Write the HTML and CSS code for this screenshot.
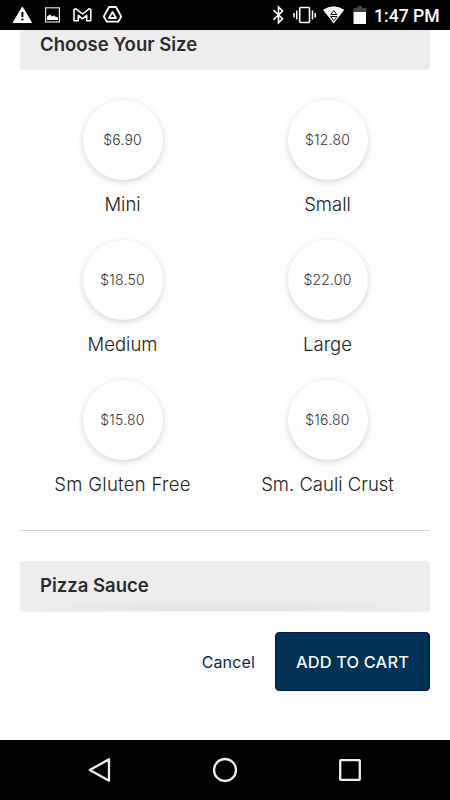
FILE: index.html
```html
<!DOCTYPE html>
<html lang="en">
<head>
<meta charset="utf-8">
<title>Choose Your Size</title>
<link rel="stylesheet" href="styles.css">
</head>
<body>
<div class="status-bar">
  <svg class="status-icons" width="130" height="30" viewBox="0 0 130 30" fill="none">
    <path d="M22.400 7 31.500 22.500H13.200Z" fill="#fff" stroke="#fff" stroke-linejoin="round"/>
    <path d="M22.400 12v5M22.400 18.600v2" stroke="#000" stroke-width="2"/>
    <rect x="45.600" y="7.800" width="13.800" height="14.200" stroke="#ddd" stroke-width="1.200"/>
    <path d="M47 20v-3.500l3-2 2 2 2-1 2 1.500 2 .5V20Z" fill="#fff"/>
    <path d="M74 9.500 76 8.800 82.500 14 89 8.800 90.800 9.500V20.800H86.700V15.500L82.500 18.800 78.300 15.500V20.800H74Z" stroke="#fff" stroke-width="1.600" stroke-linejoin="round"/>
    <path d="M109 7h7l5.200 9.500-3 5.200h-11.400l-3-5.200Z" stroke="#fff" stroke-width="1.800" stroke-linejoin="round"/>
    <path d="M112.500 12 116 18h-7Z" stroke="#fff" stroke-width="1.800" stroke-linejoin="round"/>
  </svg>
  <svg class="status-icons" width="104" height="30" viewBox="270 0 104 30" fill="none">
    <path d="m273.500 10 9 8.700-4 4V7l4 4-9 8.700" stroke="#fff" stroke-width="1.600"/>
    <rect x="299.700" y="7.500" width="9.800" height="15" rx="1" stroke="#fff" stroke-width="1.600"/>
    <path d="M296.700 10.500v9M294 13v4.500M312.500 10.500v9M315.200 13v4.500" stroke="#fff" stroke-width="1.500"/>
    <path d="M323 9.800Q333.500 2.500 344.300 9.800L333.700 23.500Z" fill="#fff"/>
    <path d="m333.800 10.500 3 4h-6ZM330.500 16.500h6.600l-3.300 4.200Z" stroke="#111" stroke-width="1"/>
    <path d="M357.500 6h4.500v2h4v4h-12.500V8h4Z" fill="#444"/>
    <path d="M353.500 12H366v12h-12.500Z" fill="#fff"/>
  </svg>
  <span class="clock">1:47 PM</span>
</div>

<main class="content">
  <h2 class="section section-size">Choose Your Size</h2>
  <div class="sizes">
    <div class="size"><div class="price">$6.90</div><div class="label">Mini</div></div>
    <div class="size"><div class="price">$12.80</div><div class="label">Small</div></div>
    <div class="size"><div class="price">$18.50</div><div class="label">Medium</div></div>
    <div class="size"><div class="price">$22.00</div><div class="label">Large</div></div>
    <div class="size"><div class="price">$15.80</div><div class="label wide">Sm Gluten Free</div></div>
    <div class="size"><div class="price">$16.80</div><div class="label">Sm. Cauli Crust</div></div>
  </div>
  <h2 class="section section-sauce">Pizza Sauce</h2>
</main>

<footer class="actions">
  <button class="cancel">Cancel</button>
  <button class="add">ADD TO CART</button>
</footer>

<nav class="nav-bar">
  <svg width="450" height="60" viewBox="0 740 450 60" fill="none" stroke="#eee" stroke-width="2.300">
    <path d="M109 759.300v21.400L89.800 770Z" stroke-linejoin="round"/>
    <circle cx="225" cy="770" r="11"/>
    <rect x="340.200" y="760.200" width="19.600" height="19.600" rx=".5"/>
  </svg>
</nav>
</body>
</html>
```
FILE: styles.css
```css
* { box-sizing: border-box; }
body {
  margin: 0;
  width: 450px;
  height: 800px;
  overflow: hidden;
  display: flex;
  flex-direction: column;
  background: #fefefe;
  color: #222;
  font-family: Inter, "Liberation Sans", sans-serif;
}
.status-bar {
  flex: none;
  height: 30px;
  display: flex;
  align-items: center;
  background: #000;
  color: #fff;
}
.status-icons { flex: none; }
.status-icons + .status-icons { margin-left: 140px; }
.clock {
  font: 500 17.6px/30px Roboto, sans-serif;
  white-space: nowrap;
  padding-top: 2px;
}
.content { padding: 0 20px; }
.section {
  margin: 0;
  padding-left: 20px;
  background: #ededed;
  color: #2b2b2d;
  font-size: 18.5px;
  font-weight: 600;
  white-space: nowrap;
}
.section-size {
  height: 40px;
  line-height: 28px;
  border-radius: 0 0 3px 3px;
}
.sizes {
  height: 461px;
  padding-top: 30px;
  display: grid;
  grid-template-columns: 1fr 1fr;
  grid-auto-rows: 140px;
  border-bottom: 1px solid #d5d5d5;
}
.size {
  display: flex;
  flex-direction: column;
  align-items: center;
}
.price {
  width: 80px;
  height: 80px;
  border-radius: 50%;
  background: #fff;
  box-shadow: 0 2px 6px rgba(0, 0, 0, .17);
  color: #333;
  font-size: 14px;
  font-weight: 300;
  letter-spacing: .2px;
  line-height: 79px;
  text-align: center;
}
.label {
  padding-top: 11px;
  font-size: 18.5px;
  font-weight: 300;
  line-height: 26px;
  white-space: nowrap;
}
.wide { letter-spacing: .3px; }
.section-sauce {
  height: 50px;
  margin-top: 30px;
  line-height: 49px;
  border-radius: 3px;
  background: radial-gradient(ellipse 50% 14px at 50% 100%, #e2e2e2, #ededed);
  box-shadow: 0 2px 3px -2px rgba(0, 0, 0, .12);
}
.actions {
  display: flex;
  justify-content: flex-end;
  align-items: center;
  gap: 20px;
  height: 59px;
  margin: 21px 20px 0;
}
button {
  margin: 0;
  padding: 0;
  border: 0;
  background: none;
  font: 400 16px/24px Inter, sans-serif;
  letter-spacing: .15px;
  white-space: nowrap;
}
.cancel { color: #072852; }
.add {
  width: 155px;
  height: 59px;
  border: 1px solid #001b49;
  border-radius: 4px;
  background: #003256;
  color: #f4f6f8;
  font-size: 16.4px;
  font-weight: 500;
}
.nav-bar {
  flex: none;
  height: 60px;
  margin-top: auto;
  background: #000;
}
```
